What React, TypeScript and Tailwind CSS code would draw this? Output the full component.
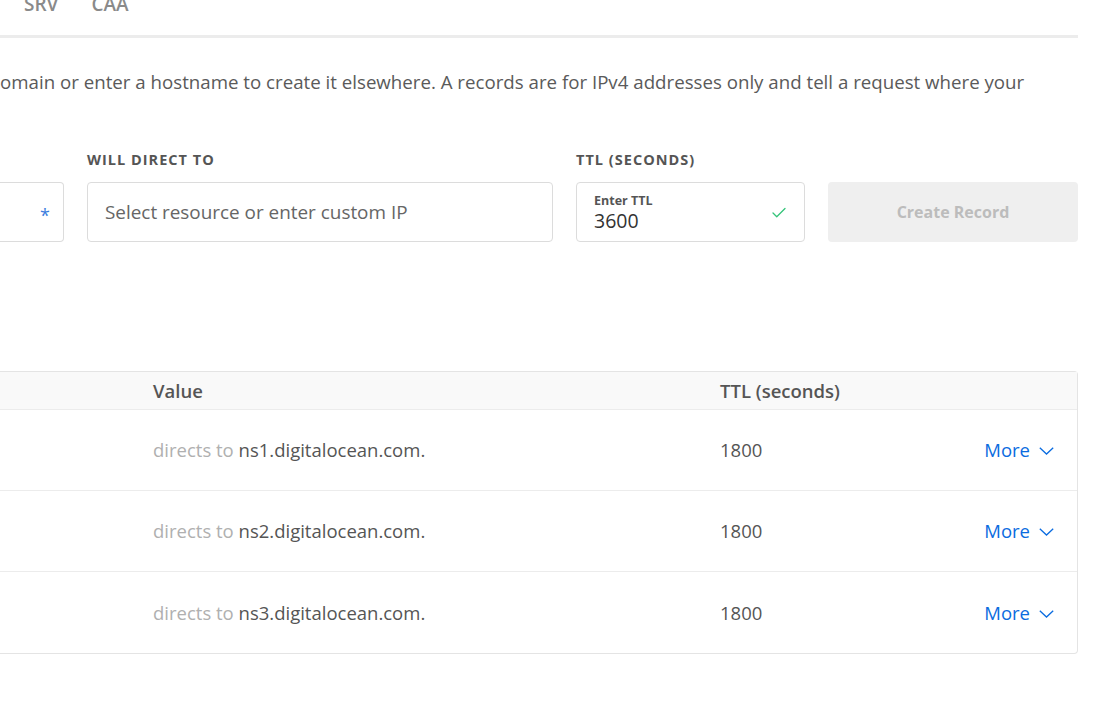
import { Check } from 'lucide-react'

const records = [
  { value: 'ns1.digitalocean.com.', ttl: '1800' },
  { value: 'ns2.digitalocean.com.', ttl: '1800' },
  { value: 'ns3.digitalocean.com.', ttl: '1800' },
]

const font = { fontFamily: '"Open Sans", Lato, sans-serif' }

function Chevron() {
  return (
    <svg width="15" height="8" viewBox="0 0 15 8" fill="none" stroke="currentColor" strokeWidth="1.3" className="mt-[2px]">
      <polyline points="0.8,0.8 7.5,7 14.2,0.8" />
    </svg>
  )
}

export default function App() {
  return (
    <div className="w-[1109px] h-[714px] overflow-hidden bg-white text-[#555]" style={font}>
      <div className="w-[1078px]">
        {/* record type tabs, cut off at the top */}
        <div className="flex gap-[33px] pl-6 h-[35px] items-start -mt-[7px]">
          <span className="text-[19px] font-semibold text-[#8a8a8a] leading-[22px]">SRV</span>
          <span className="text-[19px] font-semibold text-[#8a8a8a] leading-[22px]">CAA</span>
        </div>
        <div className="h-[3px] bg-[#ececec] mt-[7px]" />

        <p className="mt-[32px] text-[18.7px] leading-[24px] whitespace-nowrap text-[#5a5a5a]">
          omain or enter a hostname to create it elsewhere. A records are for IPv4 addresses only and tell a request where your
        </p>

        {/* form row */}
        <div className="mt-[56px] flex gap-[23px]">
          <div className="w-[64px] flex flex-col">
            <div className="h-[32px]" />
            <div className="h-[60px] border border-l-0 border-[#dcdcdc] rounded-r flex items-center justify-end pr-[13px]">
              <span className="text-[#3b7ddd] text-[18px] leading-none mt-[6px]">*</span>
            </div>
          </div>
          <div className="w-[466px] flex flex-col">
            <div className="h-[32px] text-[14.5px] leading-[20px] font-bold tracking-[0.07em] uppercase text-[#555]">Will direct to</div>
            <div className="h-[60px] border border-[#dcdcdc] rounded flex items-center px-[17px] text-[18.9px] text-[#666]">
              Select resource or enter custom IP
            </div>
          </div>
          <div className="w-[229px] flex flex-col">
            <div className="h-[32px] text-[14.5px] leading-[20px] font-bold tracking-[0.07em] uppercase text-[#555]">TTL (seconds)</div>
            <div className="h-[60px] border border-[#dcdcdc] rounded flex items-center justify-between pl-[17px] pr-[16px]">
              <div className="flex flex-col gap-[3px]">
                <span className="text-[12.5px] font-bold leading-[14px] text-[#555]">Enter TTL</span>
                <span className="text-[19.5px] leading-[20px] text-[#333]">3600</span>
              </div>
              <Check size={18} strokeWidth={1.75} className="text-[#35c47a] mt-[2px]" />
            </div>
          </div>
          <div className="flex-1 flex flex-col">
            <div className="h-[32px]" />
            <button className="h-[60px] bg-[#efefef] rounded text-[16px] font-bold text-[#bcbcbc]">Create Record</button>
          </div>
        </div>

        {/* records table */}
        <div className="mt-[129px] border border-l-0 border-[#e4e4e4] rounded-r">
          <div className="h-[38px] bg-[#f9f9f9] border-b border-[#ececec] grid grid-cols-[153px_567px_1fr] items-center text-[18.5px] font-semibold text-[#555]">
            <span />
            <span>Value</span>
            <span>TTL (seconds)</span>
          </div>
          {records.map((r, i) => (
            <div
              key={r.value}
              className={`h-[81px] grid grid-cols-[153px_567px_1fr_auto] items-center text-[18.5px] pr-[23px] ${i < records.length - 1 ? 'border-b border-[#ececec]' : ''}`}
            >
              <span />
              <span>
                <span className="text-[#b0b0b0]">directs to </span>
                <span className="text-[#555]">{r.value}</span>
              </span>
              <span className="text-[#555]">{r.ttl}</span>
              <span className="flex items-center gap-[9px] text-[#0b6ce0]">
                More
                <Chevron />
              </span>
            </div>
          ))}
        </div>
      </div>
    </div>
  )
}
